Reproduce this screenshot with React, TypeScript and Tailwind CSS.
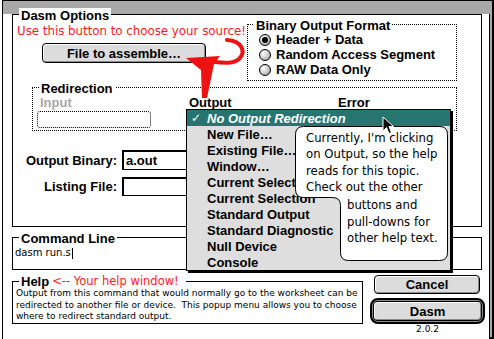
import React from 'react'

// Mac OS 8 style "Dasm Options" dialog with an open popup and help balloon
const chi = "font-['Liberation_Sans',Arial,sans-serif] font-bold text-[13px] leading-[15px]"
const gen = "font-['DejaVu_Sans',Verdana,sans-serif]"

function Title({ children, className = '' }: { children: React.ReactNode; className?: string }) {
  return (
    <span className={`absolute -top-[7px] left-[6px] bg-white px-[2px] ${chi} leading-[13px] ${className}`}>{children}</span>
  )
}

function Radio({ on, label }: { on?: boolean; label: string }) {
  return (
    <div className="flex h-[15px] items-center gap-[5px]">
      <div className="flex h-[12px] w-[12px] items-center justify-center rounded-full border border-black bg-[radial-gradient(circle_at_35%_35%,#ffffff,#c8c8c8_55%,#8a8a8a)]">
        {on && <div className="h-[6px] w-[6px] rounded-full bg-black" />}
      </div>
      <span className={chi}>{label}</span>
    </div>
  )
}

function MacButton({ label, className = '' }: { label: string; className?: string }) {
  return (
    <div
      className={`flex items-center justify-center rounded-[4px] border border-black bg-[#dcdcdc] shadow-[inset_1px_1px_0_#ffffff,inset_-1px_-1px_0_#8c8c8c] ${chi} ${className}`}
    >
      {label}
    </div>
  )
}

function Field({ value, h }: { value?: string; h: string }) {
  return (
    <div className={`w-[180px] ${h} border-l-2 border-t-2 border-r border-b border-black bg-white pl-[2px] ${chi} flex items-center`}>
      {value}
    </div>
  )
}

const menuItems = [
  'New File…',
  'Existing File…',
  'Window…',
  'Current Selection',
  'Current Selection',
  'Standard Output',
  'Standard Diagnostic',
  'Null Device',
  'Console',
]

export default function App() {
  return (
    <div className="relative h-[339px] w-[494px] overflow-hidden bg-white pl-[2px] text-black">
      {/* window frame */}
      <div className="h-[339px] w-[492px] border-l border-t border-r-2 border-b-2 border-black bg-[#a8a8a8] pr-[2px] pb-px">
        <div className="h-full w-full border-r border-b border-black bg-white">
          {/* Dasm Options */}
          <div className="relative ml-[9px] mt-[13px] h-[213px] w-[470px] border border-black">
            <Title>Dasm Options</Title>
            <div className="mt-[9px] flex">
              <div className="w-[234px] pl-[29px] pt-[19px]">
                <MacButton label="File to assemble…" className="h-[20px] w-[164px]" />
              </div>
              <div className="relative h-[57px] w-[210px] border border-dotted border-black pl-[11px] pt-[7px]">
                <Title>Binary Output Format</Title>
                <Radio on label="Header + Data" />
                <Radio label="Random Access Segment" />
                <Radio label="RAW Data Only" />
              </div>
            </div>

            {/* Redirection */}
            <div className="relative ml-[19px] mt-[6px] h-[44px] w-[425px] border border-dotted border-black">
              <Title>Redirection</Title>
              <div className="flex pt-[7px]">
                <div className="ml-[4px] w-[152px]">
                  <div className={`${chi} leading-[12px] pl-[3px] text-[#a8a8a8]`}>Input</div>
                  <div className="mt-px h-[17px] w-[114px] rounded-[3px] border border-dotted border-black" />
                </div>
                <div className={`${chi} leading-[12px] w-[149px]`}>Output</div>
                <div className={`${chi} leading-[12px]`}>Error</div>
              </div>
            </div>

            <div className="mt-[19px] flex items-center">
              <div className={`${chi} w-[104px] text-right`}>Output Binary:</div>
              <div className="ml-[5px]">
                <Field value="a.out" h="h-[20px]" />
              </div>
            </div>
            <div className="mt-[7px] flex items-center">
              <div className={`${chi} w-[104px] text-right`}>Listing File:</div>
              <div className="ml-[5px]">
                <Field h="h-[19px]" />
              </div>
            </div>
          </div>

          {/* Command Line */}
          <div className="relative ml-[9px] mt-[10px] h-[33px] w-[470px] border border-black">
            <Title>Command Line</Title>
            <div className={`${gen} flex items-center pl-[2px] pt-[9px] text-[10px] leading-[12px]`}>
              dasm run.s<span className="ml-px inline-block h-[11px] w-px bg-black" />
            </div>
          </div>

          {/* Help + buttons */}
          <div className="mt-[5px] flex items-start">
            <div className="relative ml-[9px] mt-[6px] h-[43px] w-[351px] border border-black">
              <span className="absolute -top-[7px] left-[6px] flex h-[13px] items-center bg-white px-[2px] pr-[7px]">
                <span className={`${chi} leading-[13px]`}>Help</span>
                <span className={`${gen} ml-[3px] text-[11.5px] leading-[13px] text-[#ff1a1a]`}>&lt;-- Your help window!</span>
              </span>
              <div className={`${gen} pl-[3px] pt-[6px] text-[9px] leading-[11.5px] whitespace-pre`}>
                {'Output from this command that would normally go to the worksheet can be\nredirected to another file or device.  This popup menu allows you to choose\nwhere to redirect standard output.'}
              </div>
            </div>
            <div className="ml-[7px] w-[115px]">
              <MacButton label="Cancel" className="ml-[4px] h-[19px] w-[106px]" />
              <div className="mt-[4px] h-[26px] w-[115px] rounded-[8px] border-2 border-black bg-[#8c8c8c] p-px">
                <MacButton label="Dasm" className="h-full w-full" />
              </div>
              <div className={`${gen} text-center text-[9px] leading-[11px]`}>2.0.2</div>
            </div>
          </div>
        </div>
      </div>

      {/* red annotation */}
      <svg className="pointer-events-none absolute left-0 top-0" width="494" height="339" viewBox="0 0 494 339">
        <path d="M227 40 C241 41 247 51 239 59 C233 64 224 63 214 62" fill="none" stroke="#ee1111" strokeWidth="4" strokeLinecap="round" />
        <path d="M186 58 L220 56 L214 64 L207 98 L202 98 L201 70 Z" fill="#ee1111" />
      </svg>
      <div className={`${gen} absolute left-[17px] top-[24px] text-[11.8px] leading-[15px] text-[#ff1a1a]`}>
        Use this button to choose your source!
      </div>

      {/* popup menu */}
      <div className="absolute left-[186px] top-[109px] w-[265px] border border-black bg-[#dedede] shadow-[2px_2px_0_#000]">
        <div className={`flex h-[16px] items-center bg-[#267570] ${chi} italic text-white`}>
          <span className={`${gen} w-[20px] pl-[4px] text-[12px] not-italic font-normal`}>✓</span>
          <span>No Output Redirection</span>
        </div>
        {menuItems.map((m, i) => (
          <div key={i} className={`flex h-[16px] items-center pl-[20px] ${chi}`}>
            {m}
          </div>
        ))}
      </div>

      {/* help balloon */}
      <svg className="pointer-events-none absolute left-[295px] top-[126px]" width="154" height="136" viewBox="0 0 154 136">
        <path
          d="M8.5 0.5 H144.5 Q152.5 0.5 152.5 8.5 V126.5 Q152.5 134.5 144.5 134.5 H53.5 Q45.5 134.5 45.5 126.5 V79.5 Q45.5 71.5 37.5 71.5 H8.5 Q0.5 71.5 0.5 63.5 V8.5 Q0.5 0.5 8.5 0.5 Z"
          fill="white"
          stroke="black"
          strokeWidth="1"
        />
      </svg>
      <div className={`${gen} absolute left-[306px] top-[130px] text-[11.7px] leading-[16.4px] whitespace-pre`}>
        {"Currently, I'm clicking\non Output, so the help\nreads for this topic.\nCheck out the other"}
      </div>
      <div className={`${gen} absolute left-[347px] top-[197px] text-[11.7px] leading-[16.6px] whitespace-pre`}>
        {'buttons and\npull-downs for\nother help text.'}
      </div>

      {/* mouse pointer */}
      <svg className="pointer-events-none absolute left-[382px] top-[116px]" width="14" height="20" viewBox="0 0 14 20">
        <path d="M1 1 L1 15 L4.5 11.5 L7 17.5 L9.5 16.5 L7 10.5 L11.5 10.5 Z" fill="black" stroke="white" strokeWidth="1" />
      </svg>
    </div>
  )
}
